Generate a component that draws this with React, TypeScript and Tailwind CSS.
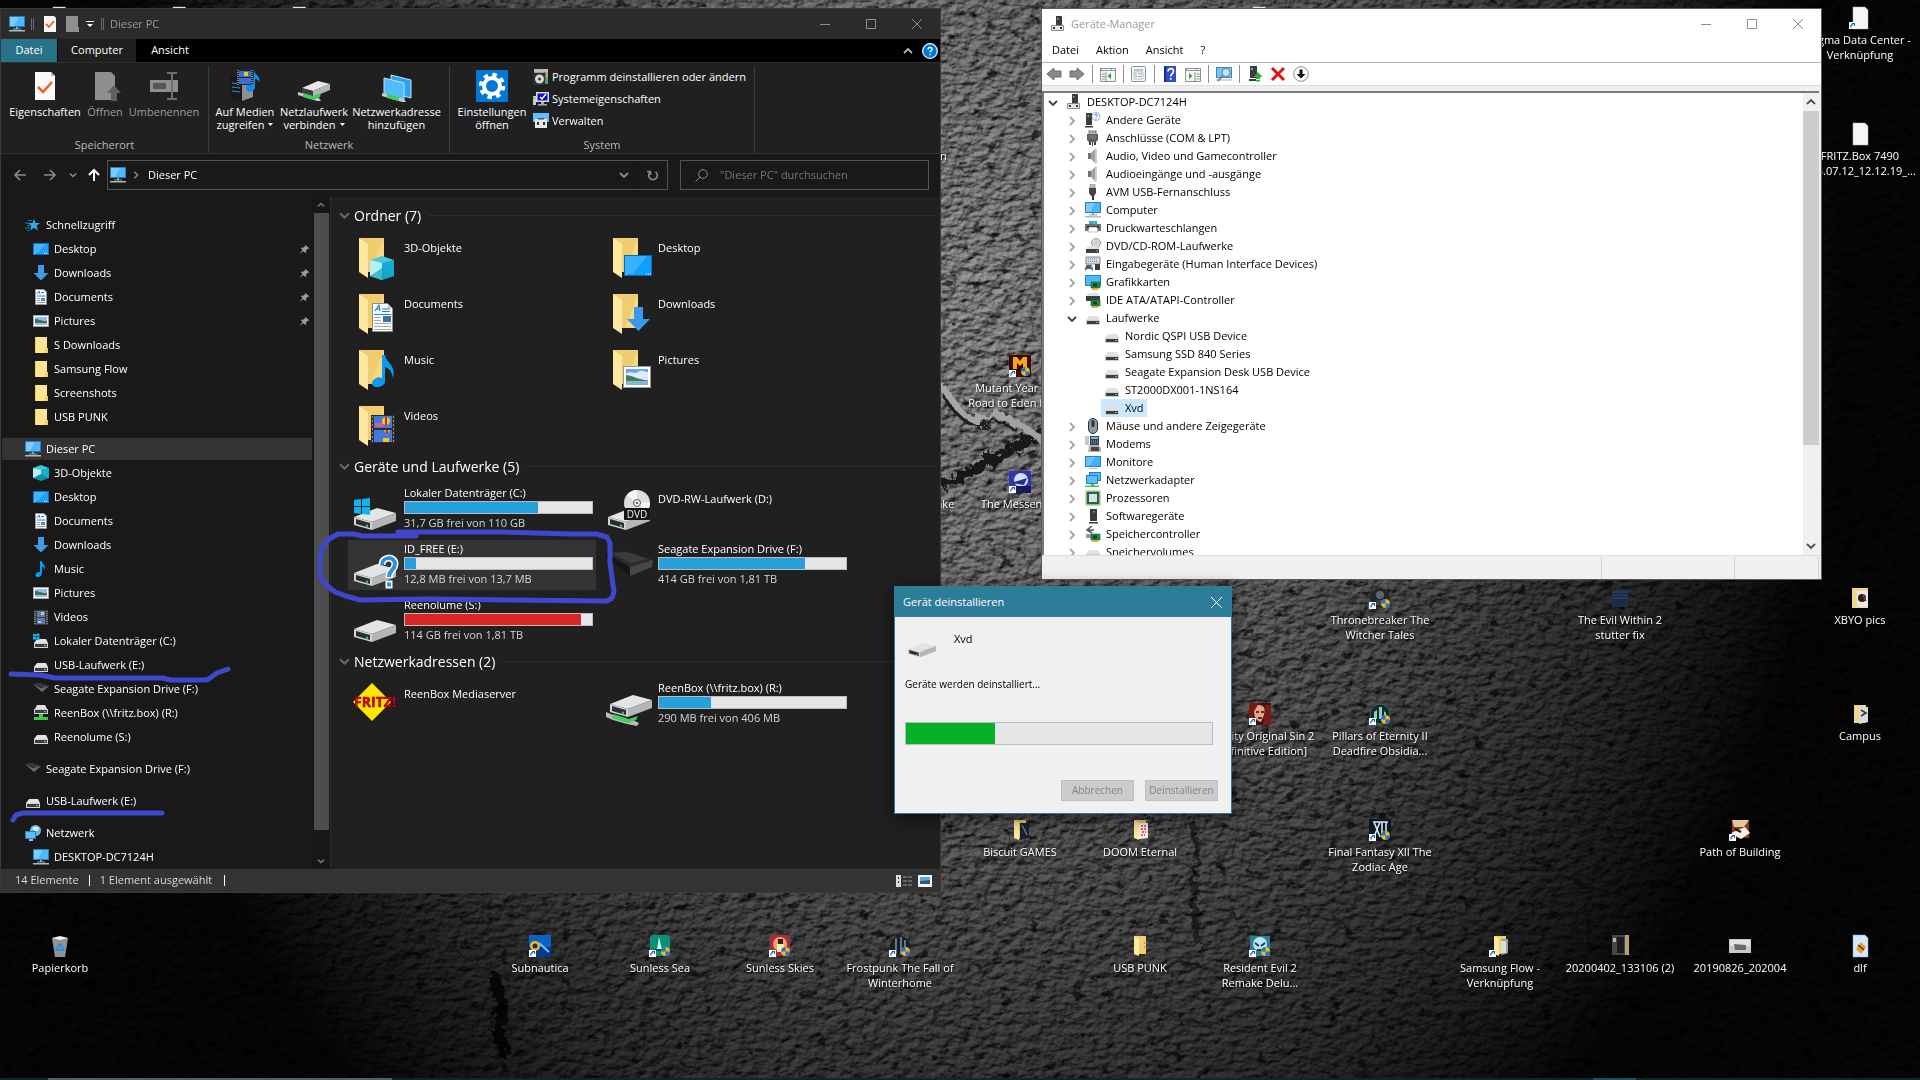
import { useState } from 'react'
import type { ReactNode } from 'react'

/* ---------- small icons (16px grid) ---------- */

const monitor = (
  <>
    <rect x="0.5" y="0.5" width="15" height="10" fill="#4db8ff" stroke="#2b7fb5" />
    <path d="M1 1h9L5 10H1z" fill="#7accff" />
    <path d="M7 11h2v2H7zM4 12.5h8v1H4z" fill="#8fa3b0" />
    <path d="M0 14h16v1.5H0z" fill="#a9bccb" />
  </>
)

const folder = (
  <>
    <path d="M2 0h12v12h-2v4H2z" fill="#ffe591" />
    <path d="M2 0h1v16H2zM12 11h3v5h-3z" fill="#f2cf63" />
  </>
)

const drive = (
  <>
    <path d="M4 6h9l2 4H1z" fill="#dfe1e3" />
    <path d="M1 10h14v5H1z" fill="#cfd1d3" />
    <path d="M2 11h12v3H2z" fill="#3b3f42" />
    <path d="M11 12h2v1h-2z" fill="#4be04b" />
  </>
)

const board = (
  <>
    <path d="M6 8h9v6H6z" fill="#1f8a4c" stroke="#0f5f33" strokeWidth="0.6" />
    <path d="M8 9.5h4v3H8z" fill="#123d26" />
    <path d="M7 14h6v2H7z" fill="#f5a623" />
  </>
)

const smallIcons: Record<string, ReactNode> = {
  monitor,
  folder,
  drive,
  desktop: (
    <>
      <rect x="0.5" y="2.5" width="15" height="11" fill="#1aa0ff" stroke="#0c6fb8" />
      <path d="M1 3h12L5 12H1z" fill="#3fb4ff" />
      <path d="M1 12h1v1H1zM11 12h1v1h-1zM13 12h1v1h-1z" fill="#fff" />
    </>
  ),
  down: <path d="M5 0h6v8h4.500L8 15.500.500 8H5z" fill="#3d9be9" />,
  doc: (
    <>
      <path d="M2.500.500h8.500l2.500 2.500v12.500h-11z" fill="#fafafa" stroke="#9a9a9a" />
      <path d="M4 5l2-3 1 3M8 3.500h3M4 7h8" stroke="#1784d8" fill="none" />
      <path d="M4 9.500h3M4 11.500h3M4 13.500h8" stroke="#9a9a9a" />
      <path d="M8 9h4v3H8z" fill="#5b86b8" />
    </>
  ),
  picture: (
    <>
      <rect x="0.5" y="2.500" width="15" height="11" fill="#fff" stroke="#a5a5a5" />
      <path d="M2 4h12v4H2z" fill="#8fc0f5" />
      <path d="M2 6c4 0 5 2 12 2v4H2z" fill="#3c6e6a" />
      <path d="M2 10h12v2H2z" fill="#9dbfd2" />
    </>
  ),
  music: <path d="M7 0h2c0 3 4 4 3 9-.5-2-1.500-3-3-3.500V12c0 2-1.500 4-4 4-3 0-3.500-3-.5-4.500 1-.5 1.500-.5 2.500-.3z" fill="#0a9cf5" />,
  video: (
    <>
      <path d="M1 1h14v15H1z" fill="#3a3a3a" />
      <path d="M2 2v13M14 2v13" stroke="#b5b5b5" strokeDasharray="1 1" />
      <path d="M4 2h8v6H4zM4 9h8v6H4z" fill="#3f7fe0" />
      <path d="M8 3h3v3H8zM5 12h3v2H5z" fill="#f0c32a" />
      <path d="M5 5h3v2H5zM9 11h2v2H9z" fill="#d6455a" />
    </>
  ),
  cube: (
    <>
      <path d="M8 0l8 3-8 3-8-3z" fill="#3fc5d6" />
      <path d="M0 3l8 2v8l-8 0z" fill="#b8f2f4" />
      <path d="M16 3L8 5v8h8z" fill="#12b3cf" />
      <path d="M0 13l8-4 8 4-8 3z" fill="#0c93a8" />
    </>
  ),
  star: (
    <>
      <path d="M9 2l1.600 4H15l-3.500 2.800L13 13.500 9 10.800 5 13.500l1.300-4.700L3 6h4.400z" fill="#3aa9f2" />
      <path d="M3 3.500h4M0 6h4M2 8.500h3M0 11h5M2 13.500h2" stroke="#1f77b8" />
    </>
  ),
  windrive: (
    <>
      {drive}
      <path d="M0 1h3v2.500H0zM3.500.500h3v3h-3zM0 4h3v2.500H0zM3.500 4h3v3h-3z" fill="#10b4f0" />
    </>
  ),
  seagate: (
    <>
      <path d="M0 3l7-1 9 3-5 2z" fill="#3a3a3a" />
      <path d="M0 3l8 4 8-2-7 6z" fill="#6a6a6a" />
    </>
  ),
  netdrive: (
    <>
      <path d="M4 0h8l2 4H2z" fill="#dfe1e3" />
      <path d="M1 4h14v5H1z" fill="#cfd1d3" />
      <path d="M2 5h12v3H2z" fill="#3b3f42" />
      <path d="M11 6h2v1h-2zM6 9h4v3h5v3H1v-3h5z" fill="#3fc94e" />
    </>
  ),
  network: (
    <>
      <circle cx="10.500" cy="5.500" r="5.500" fill="#6fb6d8" />
      <path d="M7 3q4-3 7 0-1 4-4 3-2-1-3-3z" fill="#d3eef8" />
      <rect x="0.500" y="6.500" width="10" height="7" fill="#5cc0ff" stroke="#2b7fb5" />
      <path d="M4 14h4v2H4z" fill="#a9bccb" />
    </>
  ),
  root: (
    <>
      <path d="M6 0h6v9H6z" fill="#3a3d40" />
      <path d="M7 2h1.500v1.500H7z" fill="#4be04b" />
      <path d="M1.500 9.500h12v5h-12z" fill="#e8e8e8" stroke="#8a8a8a" />
      <path d="M3 11h2v2H3zM10 11h2v2h-2z" fill="#333" />
    </>
  ),
  other: (
    <>
      <path d="M1 1h6v12H1zM0 14h8v1.500H0z" fill="#3a3d40" />
      <path d="M2.500 3H4v2H2.500z" fill="#4be04b" />
      <circle cx="11" cy="4.500" r="4" fill="#fff" stroke="#9bb4c7" />
      <path d="M9.700 3.500c0-1.700 2.800-1.700 2.700 0 0 1-1.400 1-1.400 2M11 6.500v1" stroke="#2277bb" fill="none" />
    </>
  ),
  port: (
    <>
      <path d="M3 0h9v4H3z" fill="#bdbdbd" />
      <path d="M5 1v2M8 1v2M10.500 1v2" stroke="#666" />
      <path d="M2 4h11v6l-2 2H4l-2-2z" fill="#5d5d5d" />
      <path d="M4 6h7M4 8h7" stroke="#888" />
      <path d="M4 12h2v3H4zM9 12h2v3H9zM7 12h1v4H7z" fill="#444" />
    </>
  ),
  speaker: (
    <>
      <path d="M3 5h3v6H3z" fill="#6f777d" />
      <path d="M6 5l5-5v16l-5-5z" fill="#9ba3a9" />
      <path d="M10 1h2v14h-2z" fill="#c9ced2" />
    </>
  ),
  usb: (
    <>
      <path d="M5 0h5v4H5z" fill="#bdbdbd" stroke="#777" strokeWidth="0.500" />
      <path d="M4 4h7v5l-2 3H6l-2-3z" fill="#444" />
      <path d="M7 12h2v4H7z" fill="#333" />
    </>
  ),
  printer: (
    <>
      <path d="M4 1h8v4H4z" fill="#3ea0ea" />
      <path d="M8 1h3v3H8z" fill="#49c774" />
      <path d="M0 4h16v7H0z" fill="#6c7378" />
      <path d="M2 6h12v2H2z" fill="#2c2f31" />
      <path d="M4 7h8l1 5H3z" fill="#fff" stroke="#888" strokeWidth="0.500" />
    </>
  ),
  dvd: (
    <>
      <circle cx="11" cy="5" r="4.500" fill="#dcdcdc" stroke="#999" />
      <circle cx="11" cy="5" r="1.300" fill="#fff" stroke="#888" strokeWidth="0.500" />
      <path d="M3 8h9l3 3H1z" fill="#dfe1e3" />
      <path d="M1 11h13v4H1z" fill="#3b3f42" />
      <path d="M11 12.500h2v1h-2z" fill="#4be04b" />
    </>
  ),
  hid: (
    <>
      <path d="M1 1h14v7H1z" fill="#d8dadb" stroke="#8a8a8a" />
      <path d="M3 3h10M3 5.500h10" stroke="#888" strokeDasharray="1 1" />
      <path d="M0 15c0-6 2-7 4-6 2-1 4 0 4 6l-2-2H2z" fill="#555b60" />
      <path d="M5 10h2v2H5z" fill="#2f9df0" />
      <path d="M10 8h5v6h-5z" fill="#3a3d40" />
    </>
  ),
  gpu: (
    <>
      <rect x="0.500" y="1.500" width="15" height="10" fill="#4db8ff" stroke="#2b7fb5" />
      {board}
    </>
  ),
  ide: (
    <>
      <path d="M4 1h9l2 3H1z" fill="#dfe1e3" />
      <path d="M1 4h14v5H1z" fill="#3b3f42" />
      {board}
    </>
  ),
  mouse: (
    <>
      <rect x="3.500" y="0.500" width="9" height="15" rx="4.500" fill="#8c9aa6" stroke="#2f353a" />
      <rect x="6.500" y="2" width="3" height="7" rx="1.500" fill="#2f353a" />
    </>
  ),
  modem: (
    <>
      <path d="M0 0h4v9H0z" fill="#c4c8cb" />
      <path d="M5 0h9v9H5z" fill="#3a3d40" />
      <path d="M6 1h7v2H6z" fill="#5cc0ff" />
      <path d="M6 5h7M6 7h7" stroke="#9fb1bd" strokeDasharray="1 1" />
      <path d="M4 9h10l2 3v4H3z" fill="#b0b4b7" />
      <path d="M6 11h8v4H6z" fill="#444" />
    </>
  ),
  screen: (
    <>
      <rect x="0.500" y="2.500" width="15" height="10" fill="#3fb0fb" stroke="#2b7fb5" />
      <path d="M1 3h9L5 12H1z" fill="#66c2ff" />
      <path d="M4 14h8v1H4z" fill="#a9bccb" />
    </>
  ),
  netadapter: (
    <>
      <rect x="4.500" y="0.500" width="11" height="8" fill="#4db8ff" stroke="#2b7fb5" />
      <rect x="1.500" y="3.500" width="11" height="8" fill="#5cc0ff" stroke="#2b7fb5" />
      <path d="M6 12h3v1.500h5V15H0v-1.500h6z" fill="#3fc94e" />
    </>
  ),
  cpu: (
    <>
      <rect x="0.500" y="0.500" width="15" height="15" fill="none" stroke="#c9a94b" strokeDasharray="1 1" />
      <rect x="1.500" y="1.500" width="13" height="13" fill="#1e6a45" />
      <rect x="4" y="4" width="8" height="8" fill="#dedede" />
    </>
  ),
  tower: (
    <>
      <path d="M5 1h7v12H5zM4 14h9v1.500H4z" fill="#3a3d40" />
      <path d="M8 3h1.500v1.500H8z" fill="#4be04b" />
    </>
  ),
  storage: (
    <>
      <path d="M7 0L2 4l5 3M2 4h7" stroke="#555" strokeWidth="1.500" fill="none" />
      <path d="M1 8h9l2 4H1z" fill="#9a9da0" />
      {board}
    </>
  ),
  uninstall: (
    <>
      <path d="M1 0h14v4H1z" fill="#b9bcbe" />
      <path d="M11 3h4v12h-4z" fill="#5ba07e" />
      <path d="M13 3h2v5h-2z" fill="#e39b44" />
      <path d="M1 4h11v12H1z" fill="#2b2d2f" stroke="#444" strokeWidth="0.500" />
      <circle cx="6.500" cy="10" r="4.500" fill="#d5d7d8" />
      <circle cx="6.500" cy="10" r="1.500" fill="#333" />
    </>
  ),
  sysprops: (
    <>
      <path d="M0 5h3v9H0z" fill="#c9ccce" />
      <path d="M0 6h1.500v2H0z" fill="#4be04b" />
      <path d="M3 1h13v10H3z" fill="#d9dcde" />
      <path d="M4.500 2.500h10v7h-10z" fill="#0d10c8" />
      <path d="M7 6l2 2 4-5" stroke="#fff" strokeWidth="1.500" fill="none" />
      <path d="M8 11h3v2H8zM5 13h9v1.500H5z" fill="#a9acae" />
    </>
  ),
  manage: (
    <>
      <path d="M0 0h16v9H0z" fill="#5cc0ff" />
      <path d="M2 6h12v9H2z" fill="#e8e8e8" />
      <path d="M5 5h6v1.500H5z" fill="#555" />
      <path d="M4 9h2v3H4zM10 9h2v3h-2z" fill="#333" />
    </>
  ),
  check: (
    <>
      <path d="M2 0h10l2 2v14H2z" fill="#f7f7f7" />
      <path d="M4 8l3 3 5-6" stroke="#f1601d" strokeWidth="1.800" fill="none" />
    </>
  ),
  newfolder: <path d="M2 0h12v11h1v5H2z" fill="#8f8f8f" />,
  pin: (
    <path d="M9 1l6 5-1 1h-1.500L10 10l.5 2-1.500 1-3-3-5 5 4-6.500L2.500 6 4 5l2 .5L9 3z" fill="#8f9ca6" />
  ),
}

function Icon({ name, className = 'h-4 w-4' }: { name: string; className?: string }) {
  return (
    <svg viewBox="0 0 16 16" className={`shrink-0 ${className}`} aria-hidden="true">
      {smallIcons[name]}
    </svg>
  )
}

function Chevron({ dir = 'down', className = '' }: { dir?: 'down' | 'up' | 'right'; className?: string }) {
  const paths = { down: 'M1 3l4 4 4-4', up: 'M1 7l4-4 4 4', right: 'M3 1l4 4-4 4' }
  return (
    <svg viewBox="0 0 10 10" className={`shrink-0 ${className}`} fill="none" stroke="currentColor" strokeWidth="1.8" aria-hidden="true">
      <path d={paths[dir]} />
    </svg>
  )
}

function WindowButtons({ className }: { className: string }) {
  return (
    <div className={`ml-auto flex ${className}`}>
      <button aria-label="Minimieren" className="flex h-7 w-[46px] items-center justify-center">
        <svg viewBox="0 0 10 10" className="h-[10px] w-[10px]" stroke="currentColor"><path d="M0 5.500h10" /></svg>
      </button>
      <button aria-label="Maximieren" className="flex h-7 w-[46px] items-center justify-center">
        <svg viewBox="0 0 10 10" className="h-[10px] w-[10px]" stroke="currentColor" fill="none"><path d="M.500.500h9v9h-9z" /></svg>
      </button>
      <button aria-label="Schließen" className="flex h-7 w-[46px] items-center justify-center">
        <svg viewBox="0 0 10 10" className="h-[10px] w-[10px]" stroke="currentColor"><path d="M0 0l10 10M10 0L0 10" /></svg>
      </button>
    </div>
  )
}

/* ---------- large icons (48px grid) ---------- */

const bigFolder = (
  <>
    <path d="M8 3h25v34H14z" fill="#f0cd6e" />
    <path d="M33 3v34H20z" fill="#f6d983" />
    <path d="M8 3l9 6v34l-9-6z" fill="#ffe9a2" />
  </>
)

const bigDrive = (
  <>
    <path d="M3 31l23-9 19 5-24 9z" fill="#e3e4e6" />
    <path d="M21 36l24-9v8L21 44z" fill="#b4b6b8" />
    <path d="M3 31l18 5v8L3 39z" fill="#d2d3d5" />
    <path d="M5 33l14 4v5L5 38z" fill="#2c2f31" />
    <path d="M15 38.500l2 .5v2l-2-.5z" fill="#46d146" />
  </>
)

const bigIcons: Record<string, ReactNode> = {
  cube: (
    <>
      {bigFolder}
      <path d="M31 21l12 4-12 4-12-4z" fill="#4cc9dc" />
      <path d="M19 25l12 3v17l-12-4z" fill="#b5f0f2" />
      <path d="M43 25l-12 3v17l12-4z" fill="#11acd4" />
      <path d="M19 41l12-8 12 8-12 4z" fill="#12a5b8" opacity="0.700" />
    </>
  ),
  desktop: (
    <>
      {bigFolder}
      <rect x="19.500" y="20.500" width="27" height="20" fill="#0fa0ff" stroke="#0b6bb0" />
      <path d="M20 21h22L28 39h-8z" fill="#35b1ff" />
      <path d="M21 39h1M41 39h1M43 39h1M45 39h1" stroke="#fff" />
    </>
  ),
  doc: (
    <>
      {bigFolder}
      <path d="M21.500 12.500h15l5 5v23h-20z" fill="#fbfbfb" stroke="#8c8c8c" />
      <path d="M36.500 12.500v5h5z" fill="#cfcfcf" />
      <path d="M24 20l4-6 1 6M25 18h4" stroke="#1784d8" strokeWidth="1.200" fill="none" />
      <path d="M31 18h8M31 20.500h8M23 23.500h17" stroke="#1784d8" />
      <path d="M23 26.500h7M23 29.500h7M23 32.500h17M23 35.500h17M23 38.500h17" stroke="#a9a9a9" />
      <path d="M32 25h8v6h-8z" fill="#44709c" />
    </>
  ),
  down: (
    <>
      {bigFolder}
      <path d="M29 16h9v12h7L33.500 40 22 28h7z" fill="#3b98ea" />
    </>
  ),
  music: (
    <>
      {bigFolder}
      <path d="M31 8h3c1 8 11 9 8 23-1-6-3-9-8-11v14c0 4-4 6-8 6-6 0-7-6-1-9 2-1 4-1 6 0z" fill="#0a9cf5" />
    </>
  ),
  picture: (
    <>
      {bigFolder}
      <rect x="18.500" y="19.500" width="27" height="21" fill="#fff" stroke="#9a9a9a" />
      <path d="M21 22h22v16H21z" fill="#6ba5ee" />
      <path d="M21 27c4-4 8 1 12-2s7 0 10 0v8H21z" fill="#dcebf9" />
      <path d="M21 28c7 1 12 4 22 6v1H21z" fill="#3f7f53" />
      <path d="M21 34h22v4H21z" fill="#88b4d4" />
    </>
  ),
  video: (
    <>
      {bigFolder}
      <path d="M20 12h24v28H20z" fill="#2e2e2e" />
      <path d="M21.500 13v27M42.500 13v27" stroke="#909090" strokeDasharray="2 2" />
      <path d="M23 13h18v12H23zM23 27h18v12H23z" fill="#3f78e0" />
      <path d="M24 20h8v4h-8z" fill="#e05a8a" />
      <circle cx="35" cy="18" r="4" fill="#f5c518" />
      <path d="M34 14h2v8h-2z" fill="#c42222" />
      <path d="M33 27h6l-3 5z" fill="#f5c518" />
      <path d="M32 35h6v4h-6z" fill="#f5c518" />
      <path d="M35 27h2v4h-2z" fill="#c42222" />
    </>
  ),
  drive: bigDrive,
  windrive: (
    <>
      {bigDrive}
      <path d="M3 14l7-1v7H3zM11 13l8-1v8h-8zM3 21h7v7l-7-1zM11 21h8v8l-8-1z" fill="#0fb5f2" />
    </>
  ),
  dvd: (
    <>
      {bigDrive}
      <circle cx="32" cy="17" r="13" fill="#dadcdd" />
      <path d="M32 17L22 9a13 13 0 0 1 10-5zM32 17l10 8a13 13 0 0 0 3-9z" fill="#f7f7f7" />
      <circle cx="32" cy="17" r="3.500" fill="#eee" stroke="#555" />
      <circle cx="32" cy="17" r="1" fill="#333" />
      <rect x="19" y="22" width="26" height="12" rx="1" fill="#151515" />
      <text x="32" y="31.500" fill="#eee" fontSize="10" textAnchor="middle" fontFamily="Open Sans, sans-serif">DVD</text>
    </>
  ),
  unknown: (
    <>
      {bigDrive}
      <path d="M31 23c0-9 13-9 13-1 0 6-6 6-6 14" stroke="#fff" strokeWidth="7" fill="none" />
      <path d="M34.500 38.500h7v8h-7z" fill="#fff" />
      <path d="M31 23c0-9 13-9 13-1 0 6-6 6-6 13" stroke="#2f8fdc" strokeWidth="4" fill="none" />
      <path d="M36 40.500h4v4h-4z" fill="#2f8fdc" />
    </>
  ),
  seagate: (
    <>
      <path d="M1 11l19-2 28 9-23 7z" fill="#2c2c2c" />
      <path d="M1 11l24 14v9L1 15z" fill="#161616" />
      <path d="M25 25l23-7-1 7-22 9z" fill="#474747" />
      <path d="M7 11l14-1 22 7-17 4z" fill="#3c3c3c" />
    </>
  ),
  netdrive: (
    <>
      <g transform="translate(2 -8)">{bigDrive}</g>
      <path d="M1 31l7 3 12 4 10 2 4 2-2 3-10-2-14-4-7-3z" fill="#b8babb" />
      <path d="M8 33l16 5 9-3-2 4-8 3-16-5z" fill="#3fcf56" />
    </>
  ),
  fritz: (
    <>
      <path d="M21 2l19 19-19 19L2 21z" fill="#ffe600" />
      <text x="24" y="26" fill="#e2001a" stroke="#7a0010" strokeWidth="0.500" fontSize="14" fontWeight="bold" textAnchor="middle" fontFamily="Open Sans, sans-serif">FRITZ!</text>
    </>
  ),
}

/* ---------- explorer ---------- */

type TreeItem = { label: string; icon: string; root?: boolean; pinned?: boolean; active?: boolean }

const treeGroups: TreeItem[][] = [
  [
    { label: 'Schnellzugriff', icon: 'star', root: true },
    { label: 'Desktop', icon: 'desktop', pinned: true },
    { label: 'Downloads', icon: 'down', pinned: true },
    { label: 'Documents', icon: 'doc', pinned: true },
    { label: 'Pictures', icon: 'picture', pinned: true },
    { label: 'S Downloads', icon: 'folder' },
    { label: 'Samsung Flow', icon: 'folder' },
    { label: 'Screenshots', icon: 'folder' },
    { label: 'USB PUNK', icon: 'folder' },
  ],
  [
    { label: 'Dieser PC', icon: 'monitor', root: true, active: true },
    { label: '3D-Objekte', icon: 'cube' },
    { label: 'Desktop', icon: 'desktop' },
    { label: 'Documents', icon: 'doc' },
    { label: 'Downloads', icon: 'down' },
    { label: 'Music', icon: 'music' },
    { label: 'Pictures', icon: 'picture' },
    { label: 'Videos', icon: 'video' },
    { label: 'Lokaler Datenträger (C:)', icon: 'windrive' },
    { label: 'USB-Laufwerk (E:)', icon: 'drive' },
    { label: 'Seagate Expansion Drive (F:)', icon: 'seagate' },
    { label: 'ReenBox (\\\\fritz.box) (R:)', icon: 'netdrive' },
    { label: 'Reenolume (S:)', icon: 'drive' },
  ],
  [{ label: 'Seagate Expansion Drive (F:)', icon: 'seagate', root: true }],
  [{ label: 'USB-Laufwerk (E:)', icon: 'drive', root: true }],
  [
    { label: 'Netzwerk', icon: 'network', root: true },
    { label: 'DESKTOP-DC7124H', icon: 'monitor' },
  ],
]

type Tile = { name: string; icon: string; free?: string; used?: number; full?: boolean; selected?: boolean }

const sections: { title: string; tiles: Tile[] }[] = [
  {
    title: 'Ordner (7)',
    tiles: [
      { name: '3D-Objekte', icon: 'cube' },
      { name: 'Desktop', icon: 'desktop' },
      { name: 'Documents', icon: 'doc' },
      { name: 'Downloads', icon: 'down' },
      { name: 'Music', icon: 'music' },
      { name: 'Pictures', icon: 'picture' },
      { name: 'Videos', icon: 'video' },
    ],
  },
  {
    title: 'Geräte und Laufwerke (5)',
    tiles: [
      { name: 'Lokaler Datenträger (C:)', icon: 'windrive', free: '31,7 GB frei von 110 GB', used: 71 },
      { name: 'DVD-RW-Laufwerk (D:)', icon: 'dvd' },
      { name: 'ID_FREE (E:)', icon: 'unknown', free: '12,8 MB frei von 13,7 MB', used: 6, selected: true },
      { name: 'Seagate Expansion Drive (F:)', icon: 'seagate', free: '414 GB frei von 1,81 TB', used: 78 },
      { name: 'Reenolume (S:)', icon: 'drive', free: '114 GB frei von 1,81 TB', used: 94, full: true },
    ],
  },
  {
    title: 'Netzwerkadressen (2)',
    tiles: [
      { name: 'ReenBox Mediaserver', icon: 'fritz' },
      { name: 'ReenBox (\\\\fritz.box) (R:)', icon: 'netdrive', free: '290 MB frei von 406 MB', used: 28 },
    ],
  },
]

function RibbonButton({ label, className, disabled, menu, children }: {
  label: string[]
  className: string
  disabled?: boolean
  menu?: boolean
  children: ReactNode
}) {
  return (
    <button disabled={disabled} className={`flex flex-col items-center text-center leading-[13px] ${disabled ? 'text-[#9d9d9d]' : 'text-white'} ${className}`}>
      <svg viewBox="0 0 32 32" className="mb-[3px] h-8 w-8" aria-hidden="true">{children}</svg>
      {label.map((line, i) => (
        <span key={line} className="flex items-center gap-1 whitespace-nowrap">
          {line}
          {menu && i === label.length - 1 && (
            <svg viewBox="0 0 5 3" className="h-[3px] w-[5px]"><path d="M0 0h5L2.500 3z" fill="currentColor" /></svg>
          )}
        </span>
      ))}
    </button>
  )
}

function Ribbon() {
  return (
    <div className="flex h-[92px] border-y border-[#2f2f2f] bg-[#202020] pt-[3px] text-[11px]">
      <div className="flex w-[208px] flex-col border-r border-[#3c3c3c]">
        <div className="flex pt-1 pl-1">
          <RibbonButton label={['Eigenschaften']} className="w-20">
            <path d="M6 2h16l4 4v24H6z" fill="#fafafa" />
            <path d="M22 2v4h4z" fill="#bbb" />
            <path d="M9 17l5 5 9-10" stroke="#f1601d" strokeWidth="2.500" fill="none" />
          </RibbonButton>
          <RibbonButton label={['Öffnen']} disabled className="w-10">
            <path d="M6 2h16l4 4v24H6z" fill="#8f8f8f" />
            <path d="M25 15l7 8h-4v8h-6v-8h-4z" fill="#5f5f5f" />
          </RibbonButton>
          <RibbonButton label={['Umbenennen']} disabled className="w-[78px]">
            <path d="M2 10h28v12H2z" fill="#8f8f8f" />
            <path d="M5 13h13v6H5z" fill="#555" />
            <path d="M19 3h4l1 1 1-1h4M19 29h4l1-1 1 1h4M24 4v24" stroke="#6f6f6f" strokeWidth="2" fill="none" />
          </RibbonButton>
        </div>
        <span className="mt-auto text-center text-[#b8b8b8]">Speicherort</span>
      </div>
      <div className="flex w-[241px] flex-col border-r border-[#3c3c3c]">
        <div className="flex pt-1 pl-[2px]">
          <RibbonButton label={['Auf Medien', 'zugreifen']} menu className="w-[68px]">
            <path d="M1 6l12 2v23L1 28z" fill="#17191b" />
            <path d="M13 14l11-3v16l-11 4z" fill="#8d9196" />
            <path d="M3 13l8 1M3 17l8 1M3 21l8 1" stroke="#2f8fdc" />
            <path d="M8 0h16v15H8z" fill="#222" />
            <path d="M9 0v15M23 0v15" stroke="#ddd" strokeDasharray="1 1" />
            <path d="M10 1h12v6H10zM10 8h12v6H10z" fill="#3b6fd0" />
            <path d="M15 2h4v4h-4z" fill="#f0c32a" />
            <path d="M25 0c1 5 7 6 5 12-1-2-2-3-4-3v8c0 6-9 6-9 1 0-3 4-4 7-3z" fill="#0a8ee8" />
          </RibbonButton>
          <RibbonButton label={['Netzlaufwerk', 'verbinden']} menu className="w-[70px]">
            <path d="M4 18l16-7 12 3-17 7z" fill="#e6e7e8" />
            <path d="M15 21l17-7v6l-17 7z" fill="#b4b6b8" />
            <path d="M4 18l11 3v6L4 24z" fill="#3b3f42" />
            <path d="M0 22l21 6 2 3-4 0-19-6z" fill="#c9cacb" />
            <path d="M5 23l10 3 8-3-1 4-7 3-10-3z" fill="#3fcf56" />
          </RibbonButton>
          <RibbonButton label={['Netzwerkadresse', 'hinzufügen']} className="w-[95px]">
            <path d="M10 5l20 5v18l-20-5z" fill="#2fa2ef" stroke="#bfe4fb" />
            <path d="M3 8l20 5v17L3 25z" fill="#52bcfb" stroke="#bfe4fb" />
            <path d="M1 23l22 6 2 3-4 0-20-6z" fill="#c9cacb" />
            <path d="M6 24l12 3v4L6 28z" fill="#3fcf56" />
          </RibbonButton>
        </div>
        <span className="mt-auto text-center text-[#b8b8b8]">Netzwerk</span>
      </div>
      <div className="flex w-[305px] flex-col border-r border-[#3c3c3c]">
        <div className="flex pl-[2px]">
          <RibbonButton label={['Einstellungen', 'öffnen']} className="w-20 pt-1">
            <path d="M0 0h32v32H0z" fill="#0078d7" />
            <circle cx="16" cy="16" r="8" fill="none" stroke="#fff" strokeWidth="4" />
            <circle cx="16" cy="16" r="11.200" fill="none" stroke="#fff" strokeWidth="4" strokeDasharray="4.400 4.400" />
          </RibbonButton>
          <div className="ml-px flex flex-col items-start text-white">
            {[
              ['uninstall', 'Programm deinstallieren oder ändern'],
              ['sysprops', 'Systemeigenschaften'],
              ['manage', 'Verwalten'],
            ].map(([icon, label]) => (
              <button key={label} className="flex h-[22px] items-center gap-[3px] whitespace-nowrap">
                <Icon name={icon} />
                {label}
              </button>
            ))}
          </div>
        </div>
        <span className="mt-auto text-center text-[#b8b8b8]">System</span>
      </div>
    </div>
  )
}

function DriveTile({ tile, onSelect }: { tile: Tile; onSelect: () => void }) {
  return (
    <button
      onClick={onSelect}
      className={`flex h-[50px] w-[248px] gap-[5px] pl-[3px] text-left ${tile.selected ? 'bg-[#333333]' : ''}`}
    >
      <svg viewBox="0 0 48 48" className="mt-[2px] h-12 w-12 shrink-0" aria-hidden="true">{bigIcons[tile.icon]}</svg>
      {tile.used === undefined ? (
        <span className="mt-[6px] leading-[18px] text-white">{tile.name}</span>
      ) : (
        <span className="flex w-[189px] flex-col leading-[17px]">
          <span className="text-white">{tile.name}</span>
          <span className="flex h-[13px] border border-[#bcbcbc] bg-[#e6e6e6]">
            <span className={tile.full ? 'bg-[#da2626]' : 'bg-[#26a0da]'} style={{ width: `${tile.used}%` }} />
          </span>
          <span className="text-[#d6d6d6]">{tile.free}</span>
        </span>
      )}
    </button>
  )
}

function Explorer() {
  const [selected, setSelected] = useState('ID_FREE (E:)')

  return (
    <section className="absolute top-2 left-0 flex w-[941px] flex-col border border-[#3a3a3a] bg-[#191919] text-[11px] text-white">
      <header className="flex h-[30px] items-center bg-[#2b2b2b] pl-2 text-[#9a9a9a]">
        <Icon name="monitor" />
        <span className="ml-[6px] h-3 w-[3px] border-x border-[#6a6a6a]" />
        <button aria-label="Eigenschaften" className="ml-2"><Icon name="check" /></button>
        <button aria-label="Neuer Ordner" className="ml-[6px]"><Icon name="newfolder" /></button>
        <button aria-label="Schnellzugriff anpassen" className="ml-[6px]">
          <svg viewBox="0 0 8 6" className="h-[6px] w-2"><path d="M0 0h8v1H0zM1 3h6L4 6z" fill="#fff" /></svg>
        </button>
        <span className="ml-[7px] h-3 w-[3px] border-x border-[#6a6a6a]" />
        <h1 className="ml-[6px]">Dieser PC</h1>
        <WindowButtons className="text-[#8f8f8f]" />
      </header>

      <nav className="flex h-[23px] items-center bg-black">
        <button className="h-full w-14 bg-[#28728a]">Datei</button>
        <button className="ml-px h-full w-[78px] bg-[#202020]">Computer</button>
        <button className="h-full w-[68px]">Ansicht</button>
        <button aria-label="Menüband minimieren" className="ml-auto text-[#b5b5b5]"><Chevron dir="up" className="h-[10px] w-[10px]" /></button>
        <button aria-label="Hilfe" className="mr-[2px] ml-[9px]">
          <svg viewBox="0 0 16 16" className="h-4 w-4">
            <circle cx="8" cy="8" r="7.300" fill="#0078d7" stroke="#e8f3fb" strokeWidth="1.300" />
            <path d="M6 6.500c0-3 4.200-2.600 4 0 0 1.500-2 1.500-2 3M8 11v1.200" stroke="#fff" strokeWidth="1.400" fill="none" />
          </svg>
        </button>
      </nav>

      <Ribbon />

      <div className="flex h-[43px] items-start pt-[6px] pr-[11px] pl-3">
        <div className="flex h-[30px] items-center text-[#8a8a8a]">
          <svg viewBox="0 0 14 14" className="h-[14px] w-[14px]" fill="none" stroke="currentColor" strokeWidth="1.600"><path d="M13 7H2M7 2L2 7l5 5" /></svg>
          <svg viewBox="0 0 14 14" className="ml-4 h-[14px] w-[14px]" fill="none" stroke="currentColor" strokeWidth="1.600"><path d="M1 7h11M7 2l5 5-5 5" /></svg>
          <Chevron className="ml-3 h-2 w-2" />
          <svg viewBox="0 0 14 14" className="mr-[6px] ml-[10px] h-[14px] w-[14px]" fill="none" stroke="#fff" strokeWidth="2"><path d="M7 13V2M2 7l5-5 5 5" /></svg>
        </div>
        <div className="flex h-[30px] grow items-center border border-[#535353] pl-[2px]">
          <Icon name="monitor" />
          <Chevron dir="right" className="mr-2 ml-[6px] h-2 w-2 text-[#8a8a8a]" />
          <span>Dieser PC</span>
          <Chevron className="ml-auto h-[10px] w-[10px] text-[#8a8a8a]" />
          <button aria-label="Aktualisieren" className="ml-2 flex h-full w-[30px] items-center justify-center border-l border-[#141414] text-[#8a8a8a]">
            <svg viewBox="0 0 12 12" className="h-3 w-3" fill="none" stroke="currentColor" strokeWidth="1.600"><path d="M8.500 2.800a4.300 4.300 0 1 1-5 0M3.500 6V2.500H0" /></svg>
          </button>
        </div>
        <label className="ml-3 flex h-[30px] w-[249px] items-center border border-[#535353] pl-[14px]">
          <svg viewBox="0 0 13 13" className="h-[13px] w-[13px]" fill="none" stroke="#8a8a8a"><circle cx="8" cy="5" r="4.300" /><path d="M5 8l-4.500 4.500" /></svg>
          <input type="search" aria-label="Dieser PC durchsuchen" placeholder={'"Dieser PC" durchsuchen'} className="ml-3 w-44 bg-transparent outline-none placeholder:text-[#757575]" />
        </label>
      </div>

      <div className="flex">
        <ul className="w-[311px] pt-4 pl-px">
          {treeGroups.map((group, g) => (
            <li key={g} className={g > 0 ? 'mt-2' : ''}>
              {group.map((item) => (
                <button
                  key={item.label}
                  className={`flex h-6 w-full items-center gap-[5px] ${item.root ? 'pl-[23px]' : 'pl-[31px]'} ${item.active ? 'border-y border-[#191919] bg-[#333333]' : ''}`}
                >
                  <Icon name={item.icon} />
                  {item.label}
                  {item.pinned && <Icon name="pin" className="mr-[2px] ml-auto h-[11px] w-[11px]" />}
                </button>
              ))}
            </li>
          ))}
        </ul>
        <div className="flex w-[18px] flex-col items-center bg-[#171717] text-[#7a7a7a]">
          <Chevron dir="up" className="my-1 h-2 w-2" />
          <div className="mb-[27px] w-[15px] grow bg-[#4d4d4d]" />
          <Chevron className="mb-1 h-2 w-2" />
        </div>
        <div className="grow border-l border-[#2e2e2e] bg-[#202020] pt-[3px] pl-[17px]">
          {sections.map((section) => (
            <section key={section.title}>
              <h2 className="-ml-[9px] flex h-[33px] items-center pb-[2px] text-[14px]">
                <Chevron className="mr-1 h-[11px] w-[11px] text-[#6a6a6a]" />
                {section.title}
                <span className="mr-[5px] ml-2 h-px grow bg-[#2f2f2f]" />
              </h2>
              <div className="grid grid-cols-[248px_248px] gap-[6px]">
                {section.tiles.map((tile) => (
                  <DriveTile key={tile.name} tile={{ ...tile, selected: tile.name === selected }} onSelect={() => setSelected(tile.name)} />
                ))}
              </div>
            </section>
          ))}
        </div>
      </div>

      <footer className="flex h-[23px] items-center bg-[#333333] pl-[14px] text-[#d8d8d8]">
        <span>14 Elemente</span>
        <span className="mx-[10px] h-[11px] w-px bg-white" />
        <span>1 Element ausgewählt</span>
        <span className="mx-3 h-[11px] w-px bg-white" />
        <button aria-label="Details" className="ml-auto">
          <svg viewBox="0 0 16 12" className="h-3 w-4"><path d="M0 0h5v12H0z" fill="#ddd" /><path d="M2 2h1v2H2zM2 6h1v2H2z" fill="#333" /><path d="M7 2h4M12 2h4M7 6h4M12 6h4M7 10h4M12 10h4" stroke="#999" /></svg>
        </button>
        <button aria-label="Große Symbole" className="mr-2 ml-[6px]">
          <svg viewBox="0 0 14 12" className="h-3 w-[14px]"><path d="M0 0h14v12H0z" fill="#f4f4f4" /><path d="M2 2h10v6H2z" fill="#5fa8e8" /><path d="M2 6l10-1v4H2z" fill="#33597a" /></svg>
        </button>
      </footer>
    </section>
  )
}

/* ---------- device manager ---------- */

const devices: { label: string; icon: string; level: 0 | 1 | 2; open?: boolean; selected?: boolean }[] = [
  { label: 'DESKTOP-DC7124H', icon: 'root', level: 0, open: true },
  { label: 'Andere Geräte', icon: 'other', level: 1 },
  { label: 'Anschlüsse (COM & LPT)', icon: 'port', level: 1 },
  { label: 'Audio, Video und Gamecontroller', icon: 'speaker', level: 1 },
  { label: 'Audioeingänge und -ausgänge', icon: 'speaker', level: 1 },
  { label: 'AVM USB-Fernanschluss', icon: 'usb', level: 1 },
  { label: 'Computer', icon: 'monitor', level: 1 },
  { label: 'Druckwarteschlangen', icon: 'printer', level: 1 },
  { label: 'DVD/CD-ROM-Laufwerke', icon: 'dvd', level: 1 },
  { label: 'Eingabegeräte (Human Interface Devices)', icon: 'hid', level: 1 },
  { label: 'Grafikkarten', icon: 'gpu', level: 1 },
  { label: 'IDE ATA/ATAPI-Controller', icon: 'ide', level: 1 },
  { label: 'Laufwerke', icon: 'drive', level: 1, open: true },
  { label: 'Nordic QSPI USB Device', icon: 'drive', level: 2 },
  { label: 'Samsung SSD 840 Series', icon: 'drive', level: 2 },
  { label: 'Seagate Expansion Desk USB Device', icon: 'drive', level: 2 },
  { label: 'ST2000DX001-1NS164', icon: 'drive', level: 2 },
  { label: 'Xvd', icon: 'drive', level: 2, selected: true },
  { label: 'Mäuse und andere Zeigegeräte', icon: 'mouse', level: 1 },
  { label: 'Modems', icon: 'modem', level: 1 },
  { label: 'Monitore', icon: 'screen', level: 1 },
  { label: 'Netzwerkadapter', icon: 'netadapter', level: 1 },
  { label: 'Prozessoren', icon: 'cpu', level: 1 },
  { label: 'Softwaregeräte', icon: 'tower', level: 1 },
  { label: 'Speichercontroller', icon: 'storage', level: 1 },
  { label: 'Speichervolumes', icon: 'drive', level: 1 },
]

const indent = ['pl-1', 'pl-[23px]', 'pl-[57px]']

const pane = (
  <>
    <path d="M.500 2.500h15v13H.500z" fill="#f4f4f4" stroke="#8a9399" />
    <path d="M0 2h16v3H0z" fill="#8a9399" />
    <path d="M2 3.500h9M12 3.500h3" stroke="#fff" />
  </>
)

const tools: { label: string; art: ReactNode; sep?: boolean }[] = [
  { label: 'Zurück', art: <path d="M1 8l7-6v3h7v6H8v3z" fill="#8a8a8a" stroke="#6a6a6a" /> },
  { label: 'Vorwärts', art: <path d="M15 8L8 2v3H1v6h7v3z" fill="#8a8a8a" stroke="#6a6a6a" /> },
  { label: 'Konsolenstruktur', sep: true, art: <>{pane}<path d="M6 6v9M2 8h3M2 10.500h3M2 13h3" stroke="#8a9399" /><path d="M11 7v6l-3.500-3z" fill="#2fa52f" /></> },
  { label: 'Eigenschaften', sep: true, art: <><rect x="0.500" y="0.500" width="14" height="15" rx="1" fill="#f4f6f7" stroke="#8a9399" /><path d="M3 4h9M3 11h6" stroke="#8a9399" /><path d="M3 6h9v7H3z" fill="#fff" stroke="#b5bdc3" /><path d="M4 8h2M4 10.500h2" stroke="#3ab3e6" /><path d="M7 8h4M7 10.500h4" stroke="#999" /></> },
  { label: 'Hilfe', sep: true, art: <><path d="M2 0h12v16H2z" fill="#2f4fc0" /><path d="M2 0h2v16H2z" fill="#1b2f80" /><path d="M6 5.500c0-4 6-3.500 5.500 0-.300 2.500-2.800 2.200-2.800 5M8.700 12v1.800" stroke="#fff" strokeWidth="1.700" fill="none" /></> },
  { label: 'Aktionsbereich', art: <>{pane}<path d="M10 6v9M11.500 8h3M11.500 10.500h3M11.500 13h3" stroke="#8a9399" /><path d="M4 7v6l3.500-3z" fill="#2fa52f" /></> },
  { label: 'Nach geänderter Hardware suchen', sep: true, art: <><rect x="0.500" y="1.500" width="15" height="10" fill="#6fc6fb" stroke="#4a86ab" /><path d="M0 14h16" stroke="#9fb1bd" /><circle cx="10" cy="6.500" r="4" fill="#bfe6fb" stroke="#6b7a84" /><path d="M7 9.500L2 15" stroke="#6b7a84" strokeWidth="1.800" /></> },
  { label: 'Treiber aktualisieren', sep: true, art: <><path d="M3 0h7v12H3zM2 13h7v2H2z" fill="#3a3d40" /><path d="M4 2h2v2H4z" fill="#4be04b" /><path d="M11 6l4.500 5H13v2H9v-2H6.500zM9 14h4v1.500H9z" fill="#27b427" /></> },
  { label: 'Gerät deinstallieren', art: <path d="M2 2l12 12M14 2L2 14" stroke="#e0121b" strokeWidth="3" /> },
  { label: 'Gerät deaktivieren', art: <><circle cx="8" cy="8" r="7.300" fill="#fff" stroke="#8a8a8a" /><path d="M6.500 3.500h3V8h3L8 12.500 3.500 8h3z" fill="#111" /></> },
]

function DeviceManager() {
  return (
    <section className="absolute top-2 left-[1041px] w-[781px] border border-[#5a5a5a] bg-white text-[11px] text-black">
      <header className="flex h-[30px] items-center pl-2 text-[#999999]">
        <Icon name="root" />
        <h1 className="ml-[5px]">Geräte-Manager</h1>
        <WindowButtons className="text-[#8f8f8f]" />
      </header>
      <nav className="flex h-[23px] items-center gap-[17px] pb-px pl-[10px]">
        {['Datei', 'Aktion', 'Ansicht', '?'].map((item) => <button key={item}>{item}</button>)}
      </nav>
      <div className="flex h-6 items-center gap-[7px] border-y border-[#b5b5b5] border-b-[#dcdcdc] pl-1">
        {tools.map((tool) => (
          <div key={tool.label} className="flex items-center gap-[7px]">
            {tool.sep && <span className="h-[18px] w-px bg-[#8f8f8f]" />}
            <button aria-label={tool.label}>
              <svg viewBox="0 0 16 16" className="h-4 w-4">{tool.art}</svg>
            </button>
          </div>
        ))}
      </div>
      <div className="bg-[#f0f0f0] pt-[5px]">
        <div className="mr-[2px] flex h-[464px] overflow-hidden border-t-2 border-l-2 border-[#7a7a7a] bg-white">
          <ul className="grow">
            {devices.map((device, i) => (
              <li key={i} className={`flex h-[18px] items-center ${indent[device.level]}`}>
                {device.level < 2 && (
                  <Chevron dir={device.open ? 'down' : 'right'} className={`mt-[2px] mr-2 h-[10px] w-[10px] ${device.open ? 'text-[#404040]' : 'text-[#a6a6a6]'}`} />
                )}
                <button className={`flex h-full items-center gap-[5px] ${device.level === 2 ? 'px-[3px]' : ''} ${device.selected ? 'bg-[#cce8ff]' : ''}`}>
                  <Icon name={device.icon} />
                  {device.label}
                </button>
              </li>
            ))}
          </ul>
          <div className="flex w-4 flex-col items-center bg-[#f0f0f0] text-[#505050]">
            <Chevron dir="up" className="my-1 h-[10px] w-[10px]" />
            <div className="h-[334px] w-full bg-[#cdcdcd]" />
            <Chevron className="mt-auto mb-1 h-[10px] w-[10px]" />
          </div>
        </div>
        <footer className="flex h-6 justify-end border-t border-[#dcdcdc] pt-px pr-[2px]">
          <span className="w-[133px] border-l border-[#d0d0d0]" />
          <span className="w-[85px] border-x border-[#d0d0d0]" />
        </footer>
      </div>
    </section>
  )
}

/* ---------- uninstall dialog ---------- */

function UninstallDialog() {
  return (
    <section role="dialog" aria-label="Gerät deinstallieren" className="absolute top-[586px] left-[894px] w-[338px] border border-[#2d7d9a] bg-[#f0f0f0] text-[11px] text-black shadow-[0_4px_18px_rgba(0,0,0,0.6)]">
      <header className="flex h-[30px] items-center justify-between bg-[#2d7d9a] pr-[9px] pl-2 text-white">
        <h1>Gerät deinstallieren</h1>
        <button aria-label="Schließen">
          <svg viewBox="0 0 11 11" className="h-[11px] w-[11px]" stroke="currentColor"><path d="M0 0l11 11M11 0L0 11" /></svg>
        </button>
      </header>
      <div className="px-[10px] pt-[14px] pb-3">
        <div className="flex h-9 gap-4">
          <svg viewBox="0 18 48 30" className="mt-[9px] ml-px h-5 w-8">{bigIcons.drive}</svg>
          <span>Xvd</span>
        </div>
        <p className="mt-[9px] text-[10px] leading-4">Geräte werden deinstalliert...</p>
        <div role="progressbar" aria-valuenow={29} aria-label="Fortschritt" className="mt-[30px] mr-2 h-[23px] border border-[#bcbcbc] bg-[#e6e6e6]">
          <div className="h-full w-[29%] bg-[#06b025]" />
        </div>
        <div className="mt-[35px] mr-[3px] flex justify-end gap-[11px] text-[10px]">
          <button disabled className="h-[21px] w-[73px] border border-[#bfbfbf] bg-[#cccccc] text-[#838383]">Abbrechen</button>
          <button disabled className="h-[21px] w-[73px] border border-[#bfbfbf] bg-[#cccccc] text-[#838383]">Deinstallieren</button>
        </div>
      </div>
    </section>
  )
}

/* ---------- desktop ---------- */

const paper = <path d="M4 0h12l3 3v19H4z" fill="#f4f6f7" stroke="#b0b0b0" strokeWidth="0.500" />

const openFolder = (
  <>
    <path d="M5 1h12v18H8z" fill="#f0cd6e" />
    <path d="M5 1l5 3v17l-5-2z" fill="#ffe9a2" />
  </>
)

const art: Record<string, ReactNode> = {
  paper,
  empty: null,
  photo: <><path d="M0 4h22v14H0z" fill="#c9c9c9" /><path d="M1 5h20v6H1z" fill="#e2e2e2" /><path d="M5 9l12 1v5H6z" fill="#6c6c6c" /></>,
  shot: <><path d="M3 0h17v20H3z" fill="#4a4640" /><path d="M8 2h7v16H8z" fill="#191b1e" /><path d="M16 0h4v20h-4z" fill="#b59f78" /><path d="M4 3h3v4H4z" fill="#b7b7b7" /></>,
  bin: <><path d="M3 3h16l-3 19H6z" fill="#a9aeb1" opacity="0.850" /><path d="M3 3l8-2 8 2-8 2z" fill="#eef0f1" /><path d="M11 9l4 6H7z" fill="none" stroke="#2f8fe8" strokeWidth="2" /></>,
  subnautica: <><path d="M0 0h22v22H0z" fill="#0a62c4" /><path d="M0 12h22v10H0z" fill="#043a86" /><circle cx="6" cy="11" r="5" fill="#f5b921" /><circle cx="6" cy="11" r="2.500" fill="#1c2f52" /><path d="M10 8l10 9" stroke="#6cc3ff" strokeWidth="2" /></>,
  sea: <><rect width="20" height="21" x="1" rx="3" fill="#0c8f77" /><path d="M10 2l3 13H8z" fill="#d3fff0" /><path d="M4 15h13" stroke="#06483c" strokeWidth="2" /></>,
  skies: <><rect width="20" height="21" x="1" rx="3" fill="#a52c48" /><circle cx="11" cy="9" r="7" fill="#f2a65e" /><path d="M8 9h7v8H8z" fill="#ffe9ad" /><path d="M9 4h5v5H9z" fill="#3a1c20" /></>,
  frost: <><circle cx="11" cy="11" r="10" fill="#15202c" /><path d="M7 3v16M12 2v18M16 5v12" stroke="#7d93a3" strokeWidth="1.500" /></>,
  punk: <>{openFolder}<path d="M15 8h3M15 12h3" stroke="#888" /></>,
  re2: <><path d="M1 1h20v20H1z" fill="#2d7f99" /><circle cx="11" cy="9" r="7" fill="#b9e6f0" /><path d="M6 8l4 3M16 8l-4 3M8 15h6" stroke="#183c4a" strokeWidth="2" /></>,
  flow: <>{openFolder}<path d="M12 4h7v14l-7 2z" fill="#9aa0a5" /><path d="M12 6h5v12h-5z" fill="#dcdcdc" /></>,
  dlf: <><path d="M4 0h12l3 3v19H4z" fill="#d3e9f9" stroke="#7fb2d6" strokeWidth="0.500" /><path d="M12 7l5 5-5 7-5-5z" fill="#f39c1f" /><path d="M9 10l6 5" stroke="#333" strokeWidth="1.500" /></>,
  witcher: <><circle cx="11" cy="11" r="10" fill="#22272d" /><circle cx="11" cy="8" r="4" fill="#5b6670" /><path d="M5 18c3-7 9-7 12 0z" fill="#3a424a" /></>,
  evil: <><path d="M3 2h16v18H3z" fill="#1c2b4a" /><path d="M3 5h16M3 8h16M3 11h16" stroke="#33486e" /></>,
  xbyo: <><path d="M3 1h16v20H3z" fill="#f0d68e" /><path d="M8 4h11v16H8z" fill="#e9e9e9" /><circle cx="13" cy="11" r="4" fill="#222" /><path d="M14 8l3 6" stroke="#d2242c" strokeWidth="1.500" /></>,
  sin: <><path d="M0 0h22v22H0z" fill="#3c0f10" /><path d="M5 4c4-4 12-2 11 6l-4 9c-5-1-8-6-7-15z" fill="#e5a488" /><path d="M0 0h10L4 10v12H0zM16 2h6v20h-8z" fill="#7a1a14" /><path d="M7 9h3M12 9h3M9 15h4" stroke="#2a0808" strokeWidth="1.500" /></>,
  pillars: <><circle cx="11" cy="11" r="10" fill="#152a2b" stroke="#3c6a66" /><path d="M5 16V9l3-2v9M10 16V4h3v12M15 16V8l2 2v6" fill="#8fcdb4" /></>,
  biscuit: <>{openFolder}<path d="M11 4h9v15l-9 2z" fill="#152230" /><path d="M13 6l5 10" stroke="#8fa9bd" /></>,
  doom: <>{openFolder}<path d="M10 4h9v15l-9 1z" fill="#f5f0f0" /><path d="M12 7h5M12 10h5M13 13h4M12 16h4" stroke="#e33" strokeWidth="1.500" strokeDasharray="2 1" /></>,
  ffxii: <><path d="M0 0h22v22H0z" fill="#0d1722" /><path d="M5 3l6 15M11 3L5 18M13 3v15M17 3v15M4 3h15" stroke="#d5e3ee" strokeWidth="1.600" /></>,
  pob: <><path d="M3 1h17v18H3z" fill="#8a3c12" /><path d="M3 1h17l-5 7H5z" fill="#e2c79a" /><path d="M2 14l14-6 5 6-9 6z" fill="#f5f2ee" /><path d="M6 10l6 3" stroke="#111" strokeWidth="2" /></>,
  mutant: <><path d="M0 0h22v22H0z" fill="#3a0b08" /><path d="M4 14V2h4l3 4 3-4h4v12h-4V8l-3 3-3-3v6z" fill="#f5a81c" /></>,
  messenger: <><path d="M0 0h22v22H0z" fill="#3236a8" /><circle cx="12" cy="9" r="7" fill="#cfe0ff" /><path d="M2 12l16-5-3 7z" fill="#2a2f86" /><path d="M0 15h22v7H0z" fill="#161a5c" /></>,
  campus: <><path d="M5 2h12v18H5z" fill="#f0d68e" /><path d="M10 4h9v15l-9 2z" fill="#dadada" /><path d="M12 7l5 3-5 3" stroke="#333" fill="none" strokeWidth="1.500" /></>,
}

type Shortcut = { col: number; row: number; label: string; icon: string; link?: boolean; shield?: boolean }

const shortcuts: Shortcut[] = [
  { col: 1, row: 1, label: '', icon: 'paper' },
  { col: 2, row: 1, label: '', icon: 'paper' },
  { col: 3, row: 1, label: '', icon: 'paper' },
  { col: 11, row: 1, label: '', icon: 'paper' },
  { col: 16, row: 1, label: 'Sigma Data Center - Verknüpfung', icon: 'paper', link: true },
  { col: 8, row: 2, label: 'Dokumentationen', icon: 'empty' },
  { col: 16, row: 2, label: 'FRITZ.Box 7490 113.07.12_12.12.19_...', icon: 'paper' },
  { col: 9, row: 4, label: 'Mutant Year Zero Road to Eden Delu...', icon: 'mutant', link: true, shield: true },
  { col: 8, row: 5, label: 'Resident Evil Remake [Deluxe Edition]', icon: 'empty' },
  { col: 9, row: 5, label: 'The Messenger', icon: 'messenger', link: true },
  { col: 12, row: 6, label: 'Thronebreaker The Witcher Tales', icon: 'witcher', link: true, shield: true },
  { col: 14, row: 6, label: 'The Evil Within 2 stutter fix', icon: 'evil' },
  { col: 16, row: 6, label: 'XBYO pics', icon: 'xbyo' },
  { col: 11, row: 7, label: 'Divinity Original Sin 2 [Definitive Edition]', icon: 'sin', link: true },
  { col: 12, row: 7, label: 'Pillars of Eternity II Deadfire Obsidia...', icon: 'pillars', link: true, shield: true },
  { col: 16, row: 7, label: 'Campus', icon: 'campus' },
  { col: 9, row: 8, label: 'Biscuit GAMES', icon: 'biscuit' },
  { col: 10, row: 8, label: 'DOOM Eternal', icon: 'doom' },
  { col: 12, row: 8, label: 'Final Fantasy XII The Zodiac Age', icon: 'ffxii', link: true, shield: true },
  { col: 15, row: 8, label: 'Path of Building', icon: 'pob', link: true },
  { col: 1, row: 9, label: 'Papierkorb', icon: 'bin' },
  { col: 5, row: 9, label: 'Subnautica', icon: 'subnautica', link: true },
  { col: 6, row: 9, label: 'Sunless Sea', icon: 'sea', link: true, shield: true },
  { col: 7, row: 9, label: 'Sunless Skies', icon: 'skies', link: true, shield: true },
  { col: 8, row: 9, label: 'Frostpunk The Fall of Winterhome', icon: 'frost', link: true, shield: true },
  { col: 10, row: 9, label: 'USB PUNK', icon: 'punk' },
  { col: 11, row: 9, label: 'Resident Evil 2 Remake Delu...', icon: 're2', link: true, shield: true },
  { col: 13, row: 9, label: 'Samsung Flow - Verknüpfung', icon: 'flow', link: true },
  { col: 14, row: 9, label: '20200402_133106 (2)', icon: 'shot' },
  { col: 15, row: 9, label: '20190826_202004', icon: 'photo' },
  { col: 16, row: 9, label: 'dlf', icon: 'dlf' },
]

function Wallpaper() {
  return (
    <svg className="absolute inset-0 h-full w-full" viewBox="0 0 1920 1080" preserveAspectRatio="xMidYMid slice" aria-hidden="true">
      <defs>
        <filter id="rock" x="0" y="0" width="100%" height="100%" colorInterpolationFilters="sRGB">
          <feTurbulence type="fractalNoise" baseFrequency="0.09 0.13" numOctaves="4" seed="11" result="noise" />
          <feDiffuseLighting in="noise" surfaceScale="3" diffuseConstant="0.66" lightingColor="#ffffff">
            <feDistantLight azimuth="235" elevation="48" />
          </feDiffuseLighting>
        </filter>
        {/* dark pits scattered over the stone */}
        <filter id="pits" x="0" y="0" width="100%" height="100%" colorInterpolationFilters="sRGB">
          <feTurbulence type="fractalNoise" baseFrequency="0.07 0.1" numOctaves="3" seed="29" />
          <feColorMatrix values="0 0 0 0 0  0 0 0 0 0  0 0 0 0 0  9 0 0 0 -5.9" />
        </filter>
        <filter id="rough" x="-10%" y="-10%" width="120%" height="120%">
          <feTurbulence type="fractalNoise" baseFrequency="0.12" numOctaves="4" seed="4" />
          <feDisplacementMap in="SourceGraphic" scale="16" />
        </filter>
        <radialGradient id="shade" gradientUnits="userSpaceOnUse" cx="0" cy="0" r="1" gradientTransform="translate(960 300) scale(880 1080)">
          <stop offset="0" stopColor="#000" stopOpacity="0.050" />
          <stop offset="0.250" stopColor="#000" stopOpacity="0.180" />
          <stop offset="0.550" stopColor="#000" stopOpacity="0.440" />
          <stop offset="0.800" stopColor="#000" stopOpacity="0.700" />
          <stop offset="1" stopColor="#000" stopOpacity="0.960" />
        </radialGradient>
      </defs>
      <rect width="1920" height="1080" filter="url(#rock)" />
      <rect width="1920" height="1080" filter="url(#pits)" opacity="0.600" />
      <g filter="url(#rough)" fill="none">
        <path d="M942 486l104-56" stroke="#1c1c1c" strokeWidth="10" />
        <path d="M940 384l12 17 10 13 13 7 20-7 20 8 14 9 17 12" stroke="#b9b9b9" strokeWidth="7" />
        <path d="M940 392l12 17 12 11 12 6 20-5 20 8" stroke="#222" strokeWidth="3" />
        <path d="M1192 820l5 30-4 40 3 50" stroke="#111" strokeWidth="6" opacity="0.600" />
        <path d="M494 975l8 30-4 30 8 20" stroke="#050505" strokeWidth="13" opacity="0.800" />
        <path d="M1240 1044l70-3 70-4" stroke="#8a8a8a" strokeWidth="2" opacity="0.600" />
      </g>
      <rect width="1920" height="1080" fill="url(#shade)" />
    </svg>
  )
}

function DesktopIcon({ item }: { item: Shortcut }) {
  return (
    <a
      href="#"
      className="flex flex-col items-center pt-[7px] text-center text-[11px] leading-[15px] text-white [text-shadow:1px_1px_2px_#000]"
      style={{ gridColumn: item.col, gridRow: item.row }}
    >
      <svg viewBox="0 0 22 22" className="mb-[3px] h-[22px] w-[22px] overflow-visible" aria-hidden="true">
        {art[item.icon]}
        {item.link && <path d="M0 15h7v7H0z" fill="#fff" />}
        {item.link && <path d="M2 20.500v-2l2-1.500M3 16.500h2.500V19" stroke="#1c5fb0" strokeWidth="1.200" fill="none" />}
        {item.shield && <><circle cx="16.500" cy="16.500" r="4.500" fill="#f7b61a" /><path d="M16.500 12v4.500H12A4.500 4.500 0 0 1 16.500 12zM16.500 21v-4.500H21a4.500 4.500 0 0 1-4.500 4.500z" fill="#1976d2" /></>}
      </svg>
      <span className="w-[116px]">{item.label}</span>
    </a>
  )
}

function PenMarks() {
  return (
    <svg className="pointer-events-none absolute inset-0 h-[1080px] w-[1920px]" viewBox="0 0 1920 1080" fill="none" stroke="#3f48cc" strokeWidth="5" strokeLinecap="round" strokeLinejoin="round" aria-hidden="true">
      <path d="M416 536h-53l-9-2h-16l-9 5-7 8-2 12v18l4 6 11 9 11 4 14 4 68-1 179 2 5-3 2-6-4-29v-20l-3-6-11-3h-25l-71-2H398" />
      <path d="M11 674l29 1 15 3h108l7 2h37l10-7 11-4" />
      <path d="M13 820l3-5 7-2h139" />
    </svg>
  )
}

export default function App() {
  return (
    <main className="relative h-screen w-full overflow-hidden bg-black font-['Open_Sans','Noto_Sans',sans-serif]">
      <Wallpaper />
      <div className="relative grid auto-rows-[116px] grid-cols-16">
        {shortcuts.map((item) => (
          <DesktopIcon key={`${item.col}-${item.row}`} item={item} />
        ))}
      </div>
      <Explorer />
      <DeviceManager />
      <UninstallDialog />
      <PenMarks />
      <div className="absolute inset-x-0 bottom-0 flex h-[2px] bg-[#10262d]">
        <span className="ml-12 w-[344px] bg-[#4d6168]" />
        <span className="mr-[284px] ml-auto w-[43px] bg-[#1d4f61]" />
      </div>
    </main>
  )
}
